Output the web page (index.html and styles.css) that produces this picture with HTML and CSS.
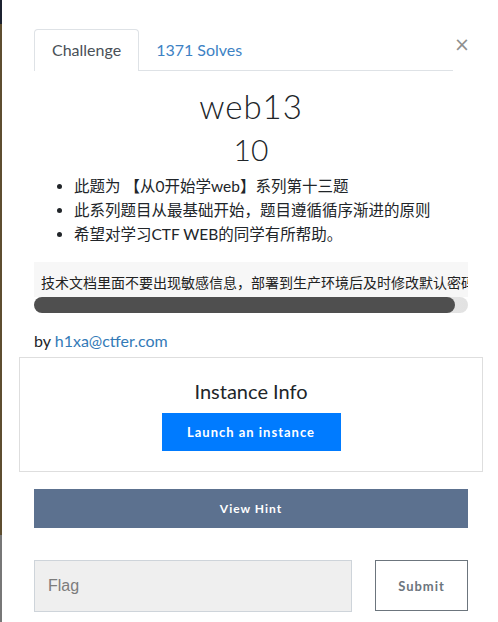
FILE: index.html
```html
<!DOCTYPE html>
<html lang="en">
<head>
    <meta charset="UTF-8">
    <meta name="viewport" content="width=device-width, initial-scale=1.0">
    <title>web13</title>
    <link rel="stylesheet" href="styles.css">
</head>
<body>
    <div class="edge"></div>
    <div class="modal">
        <div class="modal-header">
            <ul class="tabs">
                <li class="tab active">Challenge</li>
                <li class="tab">1371 Solves</li>
            </ul>
            <button class="close">&times;</button>
        </div>

        <h2 class="chal-name">web13</h2>
        <h3 class="chal-value">10</h3>

        <ul class="desc">
            <li>此题为 【从0开始学web】系列第十三题</li>
            <li>此系列题目从最基础开始，题目遵循循序渐进的原则</li>
            <li>希望对学习CTF WEB的同学有所帮助。</li>
        </ul>

        <div class="code">
            <pre>技术文档里面不要出现敏感信息，部署到生产环境后及时修改默认密码</pre>
            <div class="scroll-track"><div class="scroll-thumb"></div></div>
        </div>

        <p class="author">by <a href="#">h1xa@ctfer.com</a></p>

        <div class="instance">
            <h4>Instance Info</h4>
            <button class="launch">Launch an instance</button>
        </div>

        <button class="hint">View Hint</button>

        <div class="submit-row">
            <input class="flag" type="text" placeholder="Flag">
            <button class="submit">Submit</button>
        </div>
    </div>
</body>
</html>
```

FILE: styles.css
```css
body {
    margin: 0;
    background-color: #fff;
    font-family: Lato, "Noto Sans CJK SC", sans-serif;
    color: #212529;
    display: flex;
    min-height: 622px;
}
.edge {
    width: 2px;
    flex-shrink: 0;
    background: linear-gradient(#1c2230 0, #1c2230 24px, #5e4e30 24px, #5e4e30 86%, #777 86%);
}
.modal {
    flex: 1;
    min-width: 0;
    padding: 29px 30px 0 32px;
}
.modal-header {
    display: flex;
    align-items: flex-start;
}
.tabs {
    flex: 1;
    display: flex;
    list-style: none;
    margin: 0;
    padding: 0;
    border-bottom: 1px solid #dee2e6;
}
.tab {
    padding: 0 16px;
    height: 40px;
    line-height: 40px;
    font-size: 16px;
    color: #3d82c4;
    border: 1px solid transparent;
    border-bottom: none;
    border-radius: 4px 4px 0 0;
}
.tab.active {
    padding: 0 17px;
    color: #495057;
    border-color: #dee2e6;
    background: #fff;
    margin-bottom: -1px;
    height: 41px;
}
.close {
    width: 14px;
    margin: 3px 0 0 1px;
    padding: 0;
    border: none;
    background: none;
    font-family: "DejaVu Sans", sans-serif;
    font-size: 19px;
    line-height: 24px;
    color: #8f8f8f;
}
.chal-name {
    margin: 15px 0 0;
    text-align: center;
    font-weight: 300;
    font-size: 33px;
    line-height: 40px;
    letter-spacing: 1px;
}
.chal-value {
    margin: 5px 0 0;
    text-align: center;
    font-weight: 300;
    font-size: 30px;
    line-height: 36px;
}
.desc {
    margin: 7px 0 0;
    padding-left: 40px;
    font-size: 15.5px;
    line-height: 24px;
}
.code {
    margin-top: 16px;
}
.code pre {
    margin: 0;
    padding: 8px 7px 0;
    height: 27px;
    background: #f7f7f7;
    overflow: hidden;
    white-space: pre;
    font-family: "Noto Sans CJK SC", sans-serif;
    font-size: 14px;
    line-height: 24px;
    color: #222;
}
.scroll-track {
    height: 16px;
    border-radius: 8px;
    background: linear-gradient(90deg, #fff, #e2e2e2);
}
.scroll-thumb {
    width: 97%;
    height: 16px;
    border-radius: 8px;
    background: #4f4f4f;
}
.author {
    margin: 18px 0 0;
    font-size: 16px;
    line-height: 20px;
}
.author a {
    color: #337ab7;
    text-decoration: none;
}
.instance {
    margin: 6px -15px 0;
    border: 1px solid #dedede;
    height: 113px;
    display: flex;
    flex-direction: column;
    align-items: center;
}
.instance h4 {
    margin: 21px 0 10px;
    font-weight: 400;
    font-size: 20px;
    line-height: 24px;
}
.launch {
    width: 179px;
    height: 38px;
    border: none;
    background: #007bff;
    color: #fff;
    font-family: Lato, sans-serif;
    font-weight: 700;
    font-size: 13px;
    letter-spacing: 1px;
}
.hint {
    display: block;
    width: 100%;
    margin-top: 17px;
    height: 39px;
    border: none;
    background: #5c718f;
    color: #fff;
    font-family: Lato, sans-serif;
    font-weight: 700;
    font-size: 12px;
    letter-spacing: 1px;
}
.submit-row {
    display: flex;
    gap: 23px;
    margin-top: 32px;
}
.flag {
    flex: 1;
    min-width: 0;
    box-sizing: border-box;
    height: 52px;
    padding: 0 13px;
    border: 1px solid #ced4da;
    background: #efefef;
    font-family: "Liberation Sans", sans-serif;
    font-size: 16px;
    outline: none;
}
.flag::placeholder {
    color: #7c7c7c;
}
.submit {
    width: 93px;
    height: 51px;
    border: 1px solid #6c757d;
    background: #fff;
    color: #6c757d;
    font-family: Lato, sans-serif;
    font-weight: 700;
    font-size: 13px;
    letter-spacing: 1px;
}
```
